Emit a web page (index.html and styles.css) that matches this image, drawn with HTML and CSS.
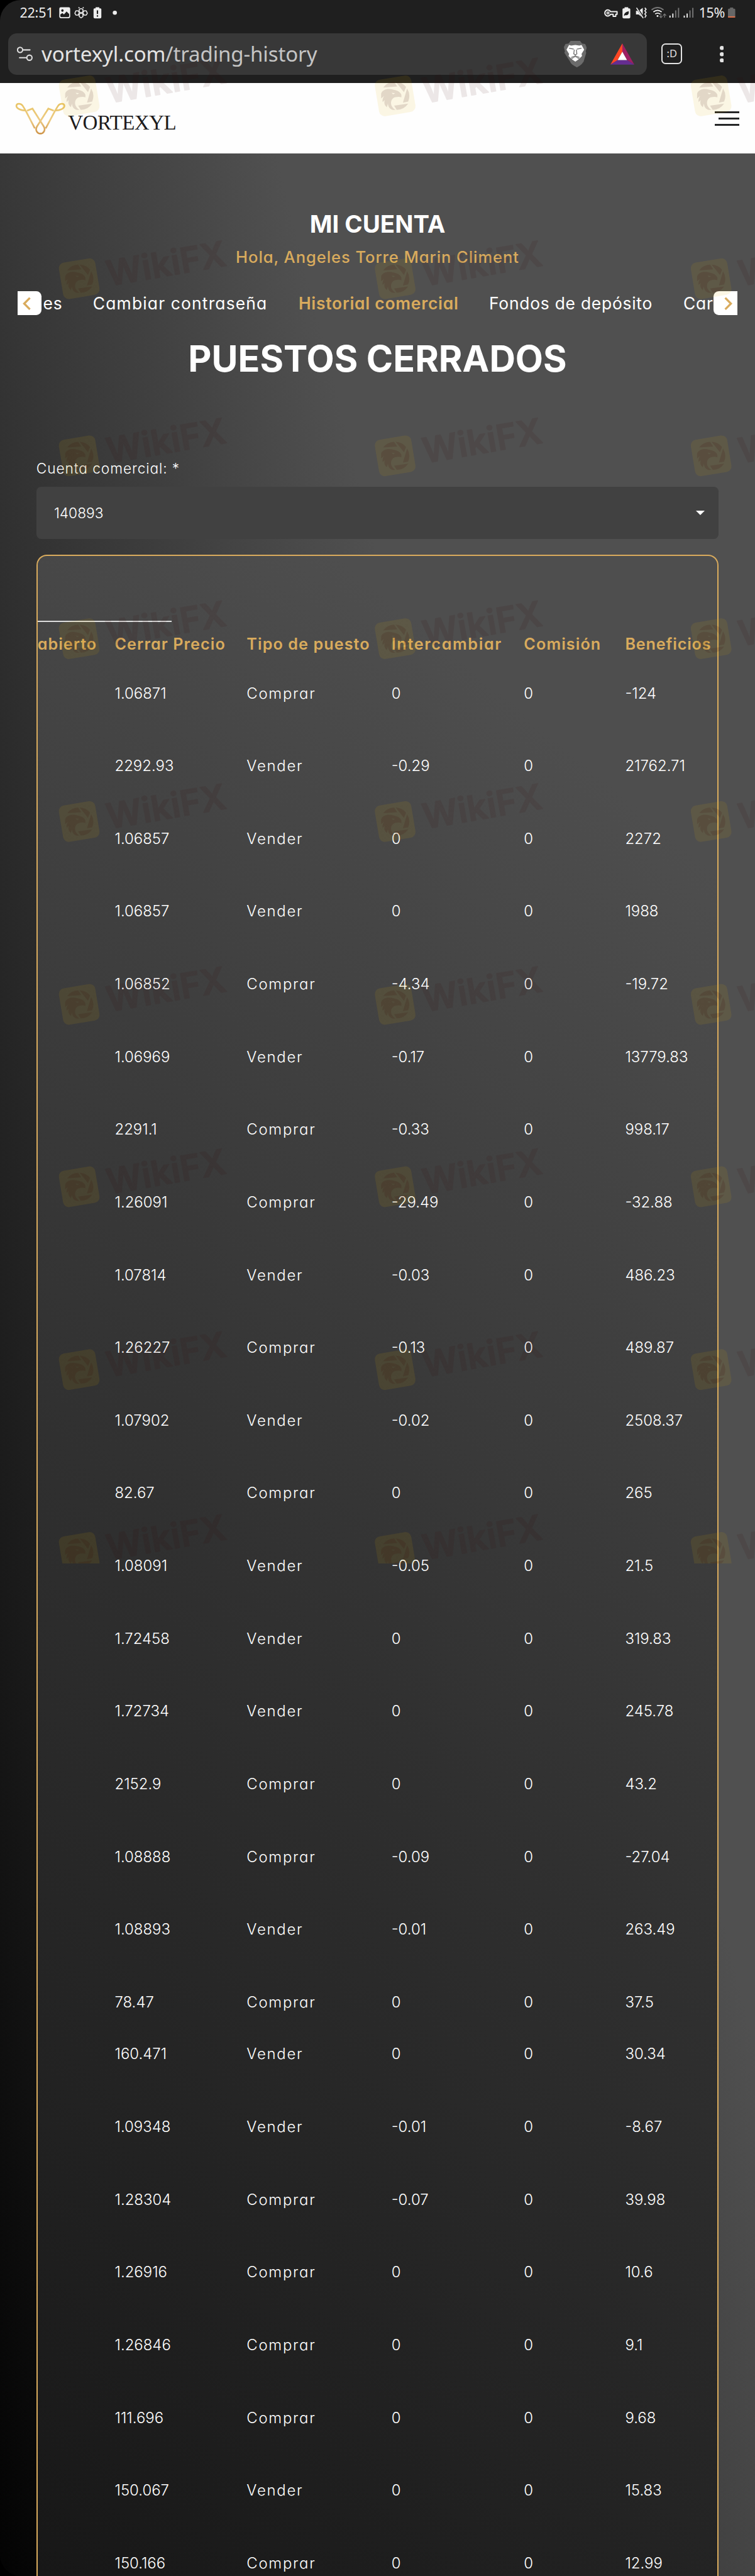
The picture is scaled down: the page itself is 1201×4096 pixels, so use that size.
FILE: index.html
```html
<!DOCTYPE html>
<html lang="es">
<head>
<meta charset="utf-8">
<title>Vortexyl - Historial comercial</title>
<link rel="stylesheet" href="styles.css">
</head>
<body>
<div class="screen">
  <div class="chrome">
    <div class="status">
      <span class="clock">22:51</span>
      <svg class="status-left" viewBox="110 0 120 48">
        <path fill="#eee" fill-rule="evenodd" d="M117 14h15a3 3 0 0 1 3 3v15a3 3 0 0 1-3 3h-15a3 3 0 0 1-3-3V17a3 3 0 0 1 3-3zM116 28v3q0 2 2 2h13q2 0 2-2v-4l-5-5-5 6-3-3zM120 18a2.3 2.3 0 1 0 .1 0z"/>
        <g fill="none" stroke="#eee" stroke-width="1.8" stroke-linejoin="round">
          <path d="M152.500 18l3.500-1.500 3.500 1.500v5l-3.500 2-3.500-2zM152.500 27l3.500-2 3.500 2v5l-3.500 2.500-3.500-2.500zM144 25.500l2-4.500h4.500l2 3-2 5h-4.500zM168 25.500l-2-4.500h-4.500l-2 3 2 5h4.500zM153 15.500l-2-1.500M159 15.500l2-1.500"/>
        </g>
        <path fill="#eee" d="M184 14h7v2h2q2 0 2 2v15q0 2.500-2.500 2.500h-10Q180 35.500 180 33V18q0-2 2-2h2z"/>
        <path stroke="#1f1f1f" stroke-width="2.600" d="M187.500 20v7M187.500 29.500v2.500"/>
        <circle cx="221" cy="24.500" r="4" fill="#eee"/>
      </svg>
      <svg class="status-right" viewBox="1160 0 180 48">
        <path fill="none" stroke="#eee" stroke-width="2.400" stroke-linejoin="round" d="M1176 22.500h12.500v5h-2.500v4h-5v-4h-5a5.800 5.800 0 1 1 0-5z"/>
        <circle cx="1171" cy="25" r="2" fill="none" stroke="#eee" stroke-width="2"/>
        <path fill="#eee" d="M1203 14h7v2h2q2 0 2 2v15q0 2.500-2.500 2.500h-10q-2.500 0-2.500-2.500V18q0-2 2-2h2z"/>
        <path fill="#1f1f1f" d="M1202 31q-1-7 9-9.500 1 9-6.500 7.500z"/>
        <path fill="#eee" d="M1225 21h5l8-6v19l-8-6h-5z"/>
        <path stroke="#1f1f1f" stroke-width="4" d="M1226 14l14 21"/>
        <path fill="none" stroke="#eee" stroke-width="2" d="M1226 15l13 20M1242 15l2.500 3-2.500 3 2.500 3-2.500 3 2.500 3-2.500 4"/>
        <g fill="none" stroke-width="2.300">
          <path stroke="#777" d="M1255 19q11.500-9 23 0"/>
          <path stroke="#eee" d="M1258.500 23q8-6 16 0M1262 27q4.500-3.500 9.500 0"/>
          <path stroke="#777" stroke-width="1.600" d="M1273 26v8m-3-3l3 3 3-3M1280 34v-7m-3 3l3-3 3 3"/>
        </g>
        <circle cx="1266.500" cy="31" r="1.800" fill="#eee"/>
        <path stroke="#eee" stroke-width="2.300" d="M1290.500 30v4M1296 26v8M1318 30v4M1323.500 26v8"/>
        <path stroke="#777" stroke-width="2.300" d="M1301.500 20v14M1307 15v19M1329 20v14M1334.500 15v19"/>
      </svg>
      <span class="percent">15%</span>
      <svg class="battery" viewBox="0 0 14 20"><path fill="#666" d="M4 0h6v2h2q2 0 2 2v13H0V4q0-2 2-2h2z"/><path fill="#dc704a" d="M0 17h14v1q0 2-2 2H2q-2 0-2-2z"/></svg>
    </div>
    <div class="toolbar">
      <div class="address">
        <svg class="tune" viewBox="0 0 30 28"><g fill="none" stroke="#ddd" stroke-width="2.500" stroke-linecap="round"><circle cx="6" cy="6.500" r="5"/><circle cx="24" cy="21.500" r="5"/><path d="M12 6.500h13M5 21.500h13"/></g></svg>
        <span class="url">vortexyl.com<span class="path">/trading-history</span></span>
        <svg class="lion" viewBox="0 0 44 51"><path fill="#6b6b6b" d="M13 0h18l4 5 6 1 3 7-2 7 1 3-5 17q-3 5-8 8l-5 3-5-3q-6-3-8-8L1 23l1-3-2-8 3-6 6-1z"/><path fill="#fff" d="M14 9l8-1 8 1 4-1 5 9-5 8 1 4-5 5-8-4-8 4-5-5 1-4-5-8 5-9zM22 31l7 4-7 5-7-5z"/><path fill="none" stroke="#6b6b6b" stroke-width="1.600" d="M10 14l9 2M34 14l-9 2M20 17l-1 8 3 2 3-2-1-8M22 27v3M14 32l8-3 8 3"/></svg>
        <svg class="bat" viewBox="0 0 46 41"><path fill="#ff4724" d="M23 0v16L14 32 0 41z"/><path fill="#9e1f63" d="M23 0l23 41-14-9-9-16z"/><path fill="#662d91" d="M0 41l14-9h18l14 9z"/><path fill="#fff" d="M23 16l9 16H14z"/></svg>
      </div>
      <span class="tabs-button">:D</span>
      <svg class="dots" viewBox="0 0 8 32"><g fill="#e2e2e2"><circle cx="4" cy="4" r="4"/><circle cx="4" cy="16" r="4"/><circle cx="4" cy="28" r="4"/></g></svg>
    </div>
  </div>

  <header class="site-header">
    <div class="logo">
      <svg class="emblem" viewBox="29 196 98 64">
        <defs><linearGradient id="gold" gradientUnits="userSpaceOnUse" x1="0" y1="198" x2="0" y2="258"><stop offset="0" stop-color="#e8c465"/><stop offset=".55" stop-color="#edcb83"/><stop offset="1" stop-color="#ce9449"/></linearGradient></defs>
        <g fill="none" stroke="url(#gold)" stroke-width="3.200">
          <path d="M49 212.500C41 213 31.500 209 31.500 204c0-5.500 8.500-6 12.500 0l5.500 9L67 247"/>
          <path d="M106.500 212.500c8 .5 17.500-3.500 17.500-8.500 0-5.500-8.500-6-12.500 0l-5.500 9L88 247"/>
          <path d="M52 213l10.500-4L84 243c5 8-1 14-6.300 14s-11.300-6-6.300-14L93 209l10.500 4"/>
        </g>
      </svg>
      <span class="wordmark">VORTEXYL</span>
    </div>
    <div class="burger"><i></i><i></i><i></i></div>
  </header>

  <main class="page">
    <h2 class="account">MI CUENTA</h2>
    <p class="hello"><span>Hola, Angeles Torre Marin Climent</span></p>
    <nav class="tabs">
      <button class="arrow prev"><svg viewBox="0 0 16 26"><path fill="none" stroke="#d9ab5d" stroke-width="4" d="M14 2L3 13l11 11"/></svg></button>
      <span class="tab t-es">es</span>
      <span class="tab t-pass">Cambiar contraseña</span>
      <span class="tab t-hist active">Historial comercial</span>
      <span class="tab t-fund">Fondos de depósito</span>
      <span class="tab t-car">Car</span>
      <button class="arrow next"><svg viewBox="0 0 16 26"><path fill="none" stroke="#d9ab5d" stroke-width="4" d="M2 2l11 11L2 24"/></svg></button>
    </nav>
    <h1 class="title">PUESTOS CERRADOS</h1>
    <label class="label">Cuenta comercial: *</label>
    <div class="select"><span>140893</span><i class="caret"></i></div>
    <section class="card">
      <div class="rule"></div>
      <table class="trades">
        <colgroup><col class="c0"><col class="c1"><col class="c2"><col class="c3"><col class="c4"><col class="c5"></colgroup>
        <thead><tr><th class="cut">abierto</th><th class="wide">Cerrar Precio</th><th class="wide">Tipo de puesto</th><th class="wider">Intercambiar</th><th class="wide">Comisión</th><th class="mid">Beneficios</th></tr></thead>
        <tbody>
          <tr><td></td><td>1.06871</td><td>Comprar</td><td>0</td><td>0</td><td>-124</td></tr>
          <tr><td></td><td>2292.93</td><td>Vender</td><td>-0.29</td><td>0</td><td>21762.71</td></tr>
          <tr><td></td><td>1.06857</td><td>Vender</td><td>0</td><td>0</td><td>2272</td></tr>
          <tr><td></td><td>1.06857</td><td>Vender</td><td>0</td><td>0</td><td>1988</td></tr>
          <tr><td></td><td>1.06852</td><td>Comprar</td><td>-4.34</td><td>0</td><td>-19.72</td></tr>
          <tr><td></td><td>1.06969</td><td>Vender</td><td>-0.17</td><td>0</td><td>13779.83</td></tr>
          <tr><td></td><td>2291.1</td><td>Comprar</td><td>-0.33</td><td>0</td><td>998.17</td></tr>
          <tr><td></td><td>1.26091</td><td>Comprar</td><td>-29.49</td><td>0</td><td>-32.88</td></tr>
          <tr><td></td><td>1.07814</td><td>Vender</td><td>-0.03</td><td>0</td><td>486.23</td></tr>
          <tr><td></td><td>1.26227</td><td>Comprar</td><td>-0.13</td><td>0</td><td>489.87</td></tr>
          <tr><td></td><td>1.07902</td><td>Vender</td><td>-0.02</td><td>0</td><td>2508.37</td></tr>
          <tr><td></td><td>82.67</td><td>Comprar</td><td>0</td><td>0</td><td>265</td></tr>
          <tr><td></td><td>1.08091</td><td>Vender</td><td>-0.05</td><td>0</td><td>21.5</td></tr>
          <tr><td></td><td>1.72458</td><td>Vender</td><td>0</td><td>0</td><td>319.83</td></tr>
          <tr><td></td><td>1.72734</td><td>Vender</td><td>0</td><td>0</td><td>245.78</td></tr>
          <tr><td></td><td>2152.9</td><td>Comprar</td><td>0</td><td>0</td><td>43.2</td></tr>
          <tr><td></td><td>1.08888</td><td>Comprar</td><td>-0.09</td><td>0</td><td>-27.04</td></tr>
          <tr><td></td><td>1.08893</td><td>Vender</td><td>-0.01</td><td>0</td><td>263.49</td></tr>
          <tr class="short"><td></td><td>78.47</td><td>Comprar</td><td>0</td><td>0</td><td>37.5</td></tr>
          <tr><td></td><td>160.471</td><td>Vender</td><td>0</td><td>0</td><td>30.34</td></tr>
          <tr><td></td><td>1.09348</td><td>Vender</td><td>-0.01</td><td>0</td><td>-8.67</td></tr>
          <tr><td></td><td>1.28304</td><td>Comprar</td><td>-0.07</td><td>0</td><td>39.98</td></tr>
          <tr><td></td><td>1.26916</td><td>Comprar</td><td>0</td><td>0</td><td>10.6</td></tr>
          <tr><td></td><td>1.26846</td><td>Comprar</td><td>0</td><td>0</td><td>9.1</td></tr>
          <tr><td></td><td>111.696</td><td>Comprar</td><td>0</td><td>0</td><td>9.68</td></tr>
          <tr><td></td><td>150.067</td><td>Vender</td><td>0</td><td>0</td><td>15.83</td></tr>
          <tr><td></td><td>150.166</td><td>Comprar</td><td>0</td><td>0</td><td>12.99</td></tr>
        </tbody>
      </table>
    </section>
  </main>

  <svg class="watermarks" viewBox="0 0 1454 3010">
    <defs>
      <g id="mark">
        <rect x="5.500" y="5" width="71" height="71" rx="11" transform="rotate(-9.500 41 40.500)" fill="#e6af00" opacity=".1"/>
        <g transform="translate(41 40.500)" fill="#370000" fill-rule="evenodd" opacity=".12">
          <path d="M-23-16A27 27 0 0 1-2-27L4-18ZM1-27A27 27 0 0 1 21-17L17-7ZM23-14A27 27 0 0 1 25 11L15 13ZM25 15A27 27 0 0 1 3 27L-2 19Z"/>
          <path d="M-27-4C-25-12-14-15-4-12C3-11 10-8 12-2L12 3C8 1 4 2-1 3C-8 6-9 13-7 19C-5 23-2 26 1 27C-8 28-13 24-14 15L-16 22C-20 18-22 15-20 8L-24 12C-25 9-24 4-21 0L-27 5ZM-7-6L0-5L-4-3Z"/>
        </g>
        <text class="mark-text" x="0" y="0" textLength="232" transform="translate(98 55) rotate(-9.900)" opacity=".085">WikiFX</text>
      </g>
      <g id="band"><use href="#mark" x="111.500"/><use href="#mark" x="720"/><use href="#mark" x="1328.500"/></g>
    </defs>
    <use href="#band" y="144"/><use href="#band" y="496"/><use href="#band" y="837"/><use href="#band" y="1189"/><use href="#band" y="1541"/><use href="#band" y="1893"/><use href="#band" y="2244"/><use href="#band" y="2596"/><use href="#band" y="2948"/>
  </svg>
</div>
</body>
</html>
```
FILE: styles.css
```css
/* 1rem = 10 design units */
html { font-size: 8.26px; background: #000; }
body { margin: 0; font-family: Inter, "Open Sans", sans-serif; font-feature-settings: "cv11"; color: #fff; }
* { box-sizing: border-box; }
svg { display: block; flex: none; }

.screen { position: relative; height: 4096px; overflow: hidden; border-radius: 4rem 0 0 4rem; display: flex; flex-direction: column; }

.chrome { flex: none; height: 16rem; background: #1f1f1f; font-family: "Noto Sans", sans-serif; }
.status { display: flex; align-items: flex-start; height: 6.4rem; padding-left: 3.8rem; color: #eee; }
.clock { font-size: 2.6rem; line-height: 4.8rem; width: 7.2rem; letter-spacing: -.02rem; white-space: nowrap; }
.status-left { width: 12rem; height: 4.8rem; }
.status-right { width: 18rem; height: 4.8rem; margin-left: 93rem; }
.percent { width: 6.2rem; padding-left: .6rem; font-size: 2.6rem; line-height: 4.8rem; letter-spacing: -.05rem; white-space: nowrap; }
.battery { width: 1.4rem; height: 2rem; margin-top: 1.4rem; }
.toolbar { display: flex; align-items: center; height: 8rem; padding-left: 1.6rem; }
.address { display: flex; align-items: center; width: 123rem; height: 8rem; padding: 0 2.5rem 0 1.7rem; border-radius: 1.7rem; background: #383838; }
.tune { width: 3rem; height: 2.8rem; }
.url { flex: 1; margin-left: 1.7rem; font-size: 4rem; line-height: 8rem; letter-spacing: -.015rem; color: #e4e4e4; white-space: nowrap; }
.path { color: #c4c4c4; }
.lion { width: 4.4rem; height: 5.1rem; margin-right: 4.5rem; }
.bat { width: 4.6rem; height: 4.1rem; }
.tabs-button { width: 4rem; height: 4rem; margin-left: 2.8rem; border: .28rem solid #e2e2e2; border-radius: .8rem; font-size: 2rem; line-height: 3.3rem; text-align: center; color: #e2e2e2; }
.dots { width: .8rem; height: 3.2rem; margin-left: 7.2rem; }

.site-header { flex: none; display: flex; align-items: flex-start; justify-content: space-between; height: 13.6rem; padding: 3.6rem 3rem 0 2.9rem; background: #fefefe; }
.logo { display: flex; }
.emblem { width: 9.8rem; height: 6.4rem; }
.wordmark { margin: 1.8rem 0 0 .4rem; font-family: "Liberation Serif", serif; font-size: 4rem; line-height: 4.4rem; letter-spacing: -.06rem; color: #1d1b1c; }
.burger { display: flex; flex-direction: column; align-items: flex-end; gap: .8rem; margin-top: 1.8rem; }
.burger i { width: 4.8rem; height: .4rem; background: #242526; }
.burger i:nth-child(2) { width: 4rem; }

.page { flex: 1; min-height: 0; overflow: hidden; display: flex; flex-direction: column; background: linear-gradient(75.8deg, #030303 0, #505050 166rem); }
.account { margin: 10.6rem 0 0; font-size: 4.65rem; line-height: 6rem; font-weight: 700; text-align: center; }
.hello { margin: 1.1rem 0 0; font-size: 3.1rem; line-height: 4.4rem; font-weight: 500; letter-spacing: .11rem; text-align: center; color: #d9ab5d; }
.tabs { display: flex; align-items: center; height: 4.7rem; margin: 4.35rem 3.4rem 0; overflow: hidden; font-size: 3.2rem; line-height: 4.6rem; white-space: nowrap; }
.tab { flex: none; letter-spacing: .09rem; }
.t-es { width: 9.9rem; padding-left: .3rem; }
.t-pass { width: 39.6rem; letter-spacing: .14rem; }
.t-hist { width: 36.7rem; }
.t-fund { width: 37.4rem; }
.t-car { width: 5.8rem; overflow: hidden; }
.active { font-weight: 600; color: #d9ab5d; letter-spacing: .09rem; }
.arrow { flex: none; display: flex; align-items: center; width: 4.6rem; height: 4.6rem; padding: 0; border: 0; background: #fff; }
.arrow svg { width: 1.6rem; height: 2.6rem; }
.prev { border-radius: 0 1rem 1rem 0; padding-left: .9rem; }
.next { border-radius: 1rem 0 0 1rem; padding-left: 2.1rem; }
.title { margin: 3.8rem 0 0; font-size: 6.95rem; line-height: 9rem; font-weight: 700; text-align: center; white-space: nowrap; }
.label { margin: 14.6rem 7rem 0; font-size: 2.75rem; line-height: 4rem; font-weight: 300; letter-spacing: .11rem; }
.select { flex: none; display: flex; align-items: center; justify-content: space-between; height: 10rem; margin: 1.6rem 7rem 0; padding: 0 2.7rem 0 3.4rem; border-radius: .9rem; background: #414141; font-size: 2.75rem; font-weight: 300; }
.caret { border: .9rem solid transparent; border-top-color: #fff; border-bottom: 0; }

.card { flex: 1; min-height: 0; overflow: hidden; margin: 3rem 7rem 0; border: 2px solid #d9ab5d; border-bottom: 0; border-radius: 2rem 2rem 0 0; background: linear-gradient(40deg, #171717 0, #303030 170rem, #4e4e4e 335rem); }
.rule { width: 25.8rem; height: 12.8rem; border-bottom: 2px solid #ddd; }
.trades { width: 130.9rem; border-collapse: collapse; table-layout: fixed; font-size: 2.9rem; line-height: 4.5rem; font-weight: 300; text-align: left; }
.c0 { width: 14.85rem; }
.c1 { width: 25.4rem; }
.c2 { width: 27.9rem; }
.c3 { width: 25.5rem; }
.c4 { width: 19.5rem; }
th, td { padding: 0; vertical-align: top; white-space: nowrap; }
th { height: 11.4rem; padding-top: 2.05rem; font-size: 3.05rem; font-weight: 600; color: #d9ab5d; }
.wide { letter-spacing: .13rem; }
.wider { letter-spacing: .2rem; }
.mid { letter-spacing: .1rem; }
.cut { padding-right: 4.1rem; text-align: right; letter-spacing: .12rem; }
td { height: 14rem; }
td:nth-child(3) { letter-spacing: .21rem; }
.short td { height: 10rem; }

.watermarks { position: absolute; top: 0; left: 0; width: 145.4rem; height: 301rem; overflow: hidden; pointer-events: none; }
.mark-text { font-family: Inter, sans-serif; font-size: 67px; font-weight: 600; fill: #370000; stroke: #370000; stroke-width: 2px; stroke-linejoin: round; }
```
